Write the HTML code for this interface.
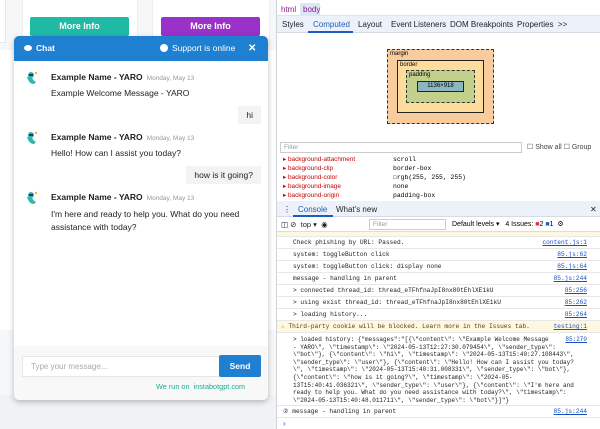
<!DOCTYPE html>
<html><head><style>
*{margin:0;padding:0;box-sizing:border-box}
body{width:600px;height:429px;overflow:hidden;position:relative;background:#fff;font-family:"Liberation Sans",sans-serif}
.abs{position:absolute;white-space:nowrap}
.mono{font-family:"Liberation Mono",monospace}
.card{position:absolute;background:#fff;border:1px solid #e6e6e6}
.btn{position:absolute;color:#fff;font-weight:bold;font-size:9px;text-align:center;line-height:19px;border-radius:2px}
.msg{position:absolute;left:51px;font-size:8.5px;color:#222}
.name{font-weight:bold}
.date{color:#999;font-size:6.5px;font-weight:normal;margin-left:4px}
.av{position:absolute;left:24px;width:16px;height:16px}
.ub{position:absolute;background:#f3f3f3;font-size:8.5px;color:#222;padding:0 8px;height:18px;line-height:18px}
.dt{font-size:8px;color:#1f1f1f}
.log{position:absolute;left:277px;width:323px;height:12px;border-bottom:1px solid #e8e8e8;font-size:6.2px;line-height:12px;padding-left:16px;color:#222;white-space:pre}
.log a{position:absolute;right:13px;top:0;color:#1a4fc4;text-decoration:underline}
.prop{position:absolute;left:283px;font-size:6.4px;line-height:9px;white-space:nowrap}
.prop b{font-weight:normal;color:#c80000}
</style></head><body>
<div class="abs" style="left:0;top:0;width:277px;height:429px;background:#f6f7f8"></div>
<div class="card" style="left:-2px;top:-2px;width:8px;height:45px"></div>
<div class="card" style="left:22px;top:-2px;width:116px;height:46px;border-color:#eee"></div>
<div class="card" style="left:152px;top:-2px;width:118px;height:46px;border-color:#eee"></div>
<div class="abs" style="left:0;top:50px;width:277px;height:280px;background:#fff"></div>
<div class="btn" style="left:30px;top:17px;width:99px;height:19px;background:#20b9a6">More Info</div>
<div class="btn" style="left:161px;top:17px;width:99px;height:19px;background:#9a31c9">More Info</div>
<div class="abs" style="left:0;top:395px;width:277px;height:34px;background:#f1f2f3"></div>
<div class="abs" style="left:14px;top:36px;width:254px;height:364px;background:#fff;border-radius:5px;box-shadow:0 2px 6px rgba(0,0,0,.25);overflow:hidden">
 <div class="abs" style="left:0;top:0;width:254px;height:25px;background:#1f7fd0;color:#fff;font-size:8.5px;font-weight:bold;line-height:25px">
  <span class="abs" style="left:10px;top:9px;width:8px;height:6px;background:#fff;border-radius:50%"></span>
  <span class="abs" style="left:22px">Chat</span>
  <span class="abs" style="left:146px;top:8px;width:8px;height:8px;background:#fff;border-radius:50%"></span>
  <span class="abs" style="left:158px;font-weight:normal">Support is online</span>
  <span class="abs" style="left:234px;font-size:10px">✕</span>
 </div>
</div>
<svg class="av" style="top:70px" viewBox="0 0 16 16"><circle cx="7" cy="5" r="3" fill="#2fb7b0"/><path d="M3 7 Q5 14 10 14 L12 12 Q8 10 8 6Z" fill="#2fb7b0"/><rect x="5" y="4" width="4" height="2" fill="#263a6a"/><circle cx="12" cy="3" r="1.2" fill="#f4b62a"/></svg>
<div class="msg" style="top:72px"><span class="name">Example Name - YARO</span><span class="date">Monday, May 13</span></div>
<div class="msg" style="top:88px">Example Welcome Message - YARO</div>
<div class="ub" style="right:339px;top:106px">hi</div>
<svg class="av" style="top:130px" viewBox="0 0 16 16"><circle cx="7" cy="5" r="3" fill="#2fb7b0"/><path d="M3 7 Q5 14 10 14 L12 12 Q8 10 8 6Z" fill="#2fb7b0"/><rect x="5" y="4" width="4" height="2" fill="#263a6a"/><circle cx="12" cy="3" r="1.2" fill="#f4b62a"/></svg>
<div class="msg" style="top:132px"><span class="name">Example Name - YARO</span><span class="date">Monday, May 13</span></div>
<div class="msg" style="top:148px">Hello! How can I assist you today?</div>
<div class="ub" style="right:339px;top:166px">how is it going?</div>
<svg class="av" style="top:190px" viewBox="0 0 16 16"><circle cx="7" cy="5" r="3" fill="#2fb7b0"/><path d="M3 7 Q5 14 10 14 L12 12 Q8 10 8 6Z" fill="#2fb7b0"/><rect x="5" y="4" width="4" height="2" fill="#263a6a"/><circle cx="12" cy="3" r="1.2" fill="#f4b62a"/></svg>
<div class="msg" style="top:192px"><span class="name">Example Name - YARO</span><span class="date">Monday, May 13</span></div>
<div class="msg" style="top:208px;width:215px;line-height:13px;white-space:normal">I'm here and ready to help you. What do you need assistance with today?</div>
<div class="abs" style="left:14px;top:346px;width:254px;height:54px;background:#f8f8f8;border-radius:0 0 5px 5px"></div>
<div class="abs" style="left:22px;top:356px;width:198px;height:21px;background:#fff;border:1px solid #e6e6e6;font-size:8px;color:#aaa;line-height:19px;padding-left:8px">Type your message...</div>
<div class="abs" style="left:219px;top:355px;width:42px;height:22px;background:#1f7fd0;border-radius:2px;color:#fff;font-size:8.5px;font-weight:bold;text-align:center;line-height:22px">Send</div>
<div class="abs" style="left:156px;top:382px;font-size:7.3px;color:#1fa99a">We run on &nbsp;instabotgpt.com</div>
<div class="abs" style="left:276px;top:0;width:1px;height:429px;background:#cfd4db"></div>
<div class="abs" style="left:277px;top:0;width:323px;height:16px;background:#fff;border-bottom:1px solid #e3e3e3"></div>
<div class="abs dt" style="left:281px;top:5px;color:#8a1a8a">html</div>
<div class="abs" style="left:300px;top:3px;width:20px;height:13px;background:#dde6f5"></div>
<div class="abs dt" style="left:303px;top:5px;color:#8a1a8a">body</div>
<div class="abs" style="left:277px;top:16px;width:323px;height:17px;background:#edf2fa;border-bottom:1px solid #d6dbe3"></div>
<div class="abs dt" style="left:282px;top:20px">Styles</div>
<div class="abs dt" style="left:313px;top:20px;color:#1a5fbf">Computed</div>
<div class="abs" style="left:308px;top:31px;width:45px;height:2px;background:#1a5fbf"></div>
<div class="abs dt" style="left:358px;top:20px">Layout</div>
<div class="abs dt" style="left:391px;top:20px">Event Listeners</div>
<div class="abs dt" style="left:450px;top:20px">DOM Breakpoints</div>
<div class="abs dt" style="left:517px;top:20px">Properties &nbsp;&gt;&gt;</div>
<div class="abs" style="left:387px;top:49px;width:107px;height:75px;background:#f9cc9d;border:1px dashed #333"></div>
<div class="abs" style="left:397px;top:60px;width:87px;height:53px;background:#fddd9b;border:1.5px solid #222"></div>
<div class="abs" style="left:406px;top:70px;width:69px;height:33px;background:#c3d08b;border:1px dashed #333"></div>
<div class="abs" style="left:417px;top:81px;width:47px;height:11px;background:#8cb6c0;border:1px solid #222;font-size:6px;text-align:center;line-height:9px">1136×918</div>
<div class="abs" style="left:390px;top:51px;font-size:6px">margin</div>
<div class="abs" style="left:400px;top:62px;font-size:6px">border</div>
<div class="abs" style="left:409px;top:72px;font-size:6px">padding</div>
<div class="abs" style="left:280px;top:142px;width:242px;height:11px;border:1px solid #ccc;font-size:6.5px;color:#999;padding-left:3px;line-height:9px">Filter</div>
<div class="abs" style="left:527px;top:143px;color:#444;font-size:7px">☐ Show all ☐ Group</div>
<div class="prop" style="top:155px"><b>▸ background-attachment</b></div><div class="prop mono" style="left:393px;top:155px">scroll</div>
<div class="prop" style="top:164px"><b>▸ background-clip</b></div><div class="prop mono" style="left:393px;top:164px">border-box</div>
<div class="prop" style="top:173px"><b>▸ background-color</b></div><div class="prop mono" style="left:393px;top:173px">☐rgb(255, 255, 255)</div>
<div class="prop" style="top:182px"><b>▸ background-image</b></div><div class="prop mono" style="left:393px;top:182px">none</div>
<div class="prop" style="top:191px"><b>▸ background-origin</b></div><div class="prop mono" style="left:393px;top:191px">padding-box</div>
<div class="abs" style="left:277px;top:201px;width:323px;height:16px;background:#edf2fa;border-bottom:1px solid #d6dbe3"></div>
<div class="abs dt" style="left:283px;top:205px">⋮</div>
<div class="abs dt" style="left:298px;top:205px;color:#1a5fbf">Console</div>
<div class="abs" style="left:293px;top:215px;width:40px;height:2px;background:#1a5fbf"></div>
<div class="abs dt" style="left:336px;top:205px">What's new</div>
<div class="abs dt" style="left:590px;top:205px">✕</div>
<div class="abs" style="left:277px;top:217px;width:323px;height:15px;border-bottom:1px solid #ddd"></div>
<div class="abs dt" style="left:281px;top:220px;font-size:7.5px">◫ ⊘ &nbsp;top ▾ &nbsp;◉</div>
<div class="abs" style="left:369px;top:219px;width:77px;height:11px;border:1px solid #ccc;font-size:6.5px;color:#999;padding-left:3px;line-height:9px">Filter</div>
<div class="abs" style="left:452px;top:220px;font-size:7px">Default levels ▾ &nbsp;&nbsp;4 Issues: <span style="color:#d33">■</span>2 <span style="color:#1a5fbf">■</span>1 &nbsp;⚙</div>
<div class="log mono" style="top:232px;height:5px;background:#fff8e1"></div>
<div class="log mono" style="top:237px">Check phishing by URL: Passed.<a>content.js:1</a></div>
<div class="log mono" style="top:249px">system: toggleButton click<a>85.js:62</a></div>
<div class="log mono" style="top:261px">system: toggleButton click: display none<a>85.js:64</a></div>
<div class="log mono" style="top:273px">message - handling in parent<a>85.js:244</a></div>
<div class="log mono" style="top:285px">&gt; connected thread_id: thread_eTFhfnaJpI8nx80tEhlXE1kU<a>85:256</a></div>
<div class="log mono" style="top:297px">&gt; using exist thread_id: thread_eTFhfnaJpI8nx80tEhlXE1kU<a>85:262</a></div>
<div class="log mono" style="top:309px">&gt; loading history...<a>85:264</a></div>
<div class="log mono" style="top:321px;background:#fff8e1;color:#5c3c00;padding-left:4px"><span style="color:#e0a000">⚠</span> Third-party cookie will be blocked. Learn more in the Issues tab.<a>testing:1</a></div>
<div class="log mono" style="top:333px;height:73px;line-height:7.6px;font-size:6px;padding-top:3px">&gt; loaded history: {"messages":"[{\"content\": \"Example Welcome Message
- YARO\", \"timestamp\": \"2024-05-13T12:27:30.079454\", \"sender_type\":
\"bot\"}, {\"content\": \"hi\", \"timestamp\": \"2024-05-13T15:40:27.108443\",
\"sender_type\": \"user\"}, {\"content\": \"Hello! How can I assist you today?
\", \"timestamp\": \"2024-05-13T15:40:31.008331\", \"sender_type\": \"bot\"},
{\"content\": \"how is it going?\", \"timestamp\": \"2024-05-
13T15:40:41.036321\", \"sender_type\": \"user\"}, {\"content\": \"I'm here and
ready to help you. What do you need assistance with today?\", \"timestamp\":
\"2024-05-13T15:40:48.011711\", \"sender_type\": \"bot\"}]"}<a style="top:3px;line-height:7.6px;background:#fff">85:270</a></div>
<div class="log mono" style="top:406px;padding-left:6px">② message - handling in parent<a>85.js:244</a></div>
<div class="abs dt" style="left:283px;top:419px;color:#1a5fbf">›</div>
</body></html>
